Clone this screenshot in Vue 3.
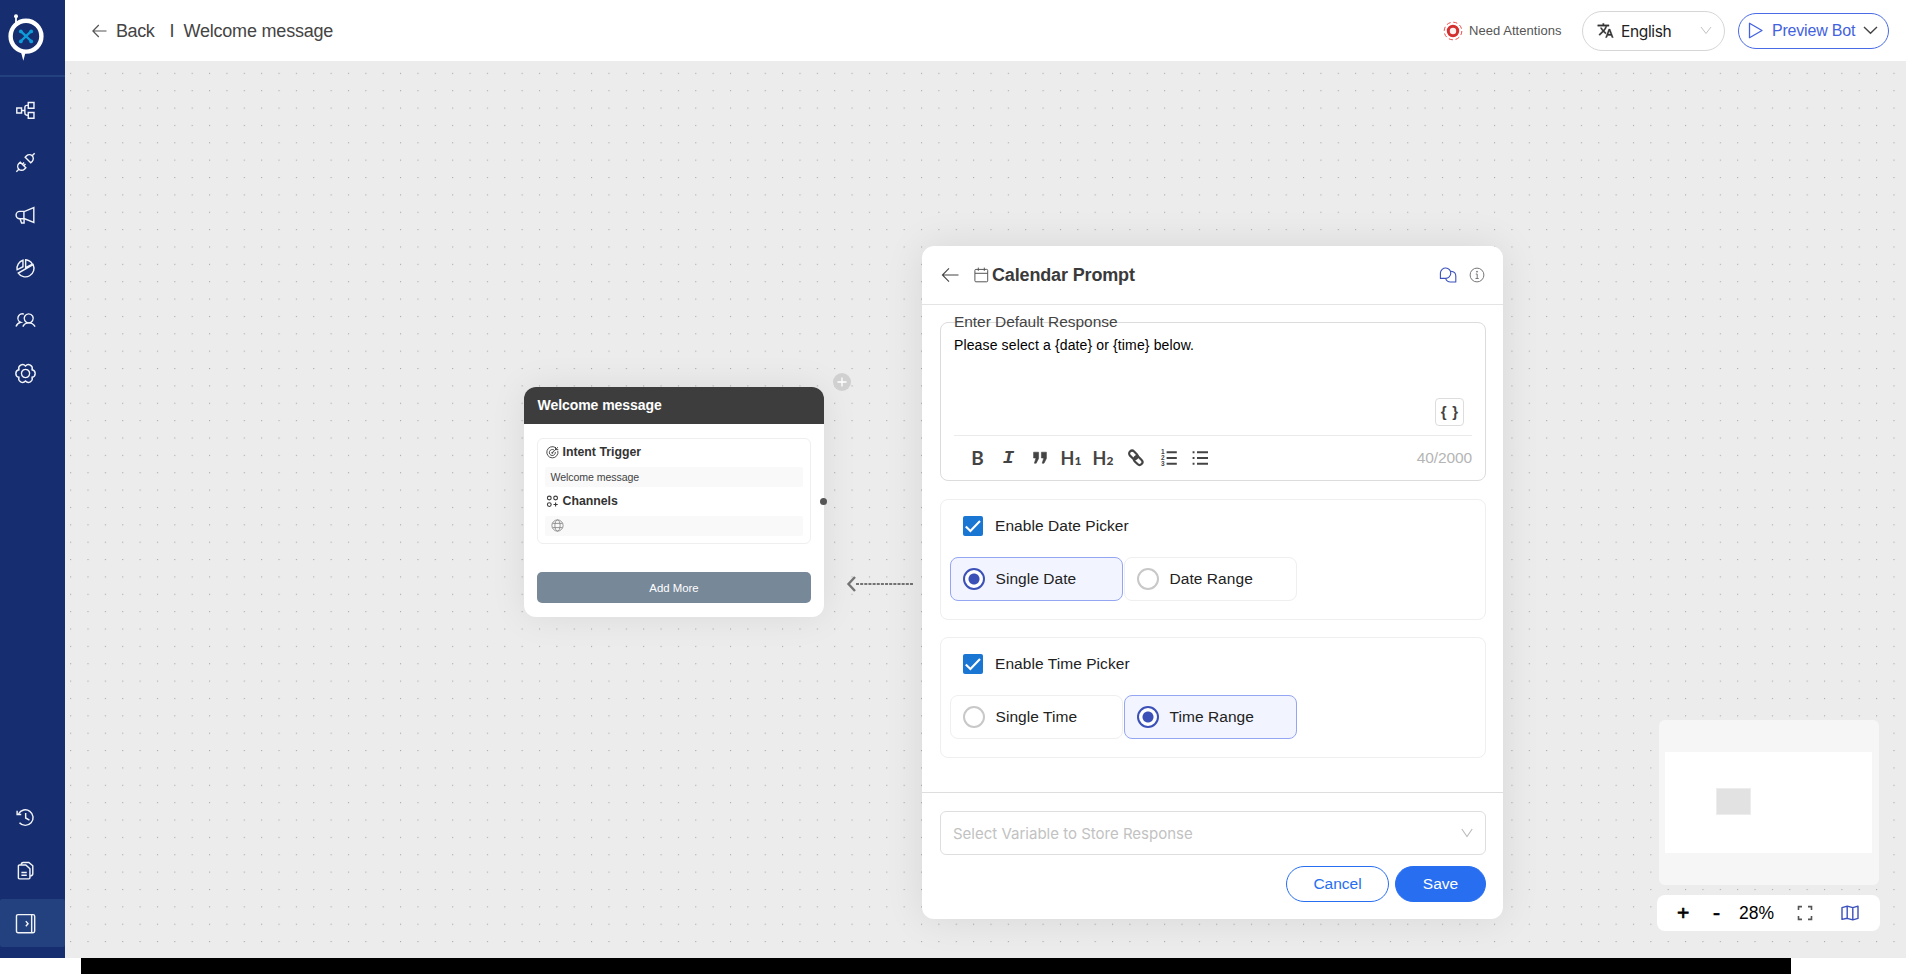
<template>
  <div class="page">
    <div class="workspace">
      <aside class="sidebar">
        <div class="logo">
          <svg width="40" height="50" viewBox="0 0 40 50">
            <path d="M11 6v8" stroke="#fff" stroke-width="1.8" />
            <circle cx="11" cy="4.3" r="2" fill="#fff" />
            <path d="M14.9 36h9l-3.4 4.5-2.2 8.3-2.2-8.3z" fill="#fff" />
            <circle cx="21" cy="24.2" r="15.4" fill="#162e70" stroke="#fff" stroke-width="4.4" />
            <path d="M16 19.4l10 9.6M26 19.4l-10 9.6" stroke="#0d9ddb" stroke-width="2.4" />
            <g fill="#0d9ddb">
              <circle cx="15.8" cy="19.4" r="1.9" />
              <circle cx="26.2" cy="19.4" r="1.9" />
              <circle cx="15.8" cy="29.4" r="1.9" />
              <circle cx="26.2" cy="29.4" r="1.9" />
            </g>
          </svg>
        </div>
        <nav class="menu">
          <a v-for="item in topMenu" :key="item.name" class="menu-item" :title="item.name">
            <svg class="menu-icon" viewBox="0 0 24 24"><path v-for="d in item.paths" :key="d" :d="d" /></svg>
          </a>
        </nav>
        <nav class="menu menu-bottom">
          <a
            v-for="item in bottomMenu"
            :key="item.name"
            class="menu-item"
            :class="{ active: item.active }"
            :title="item.name"
          >
            <svg class="menu-icon" viewBox="0 0 24 24"><path v-for="d in item.paths" :key="d" :d="d" /></svg>
          </a>
        </nav>
      </aside>

      <main class="main">
        <header class="topbar">
          <svg class="back-icon" width="15" height="14" viewBox="0 0 15 14"><path d="M14.5 7H1M6.8 1L.9 7l5.9 6" /></svg>
          <span class="back">Back</span>
          <span class="sep">I</span>
          <span class="title">Welcome message</span>
          <div class="topbar-right">
            <svg width="20" height="20" viewBox="0 0 20 20" fill="none">
              <circle cx="10" cy="10" r="8.8" stroke="#ee4b4b" stroke-width="1" stroke-dasharray="4.2 2.71" />
              <circle cx="10" cy="10" r="4.7" fill="#fff0f0" stroke="#d32f2f" stroke-width="3" />
            </svg>
            <span class="attention">Need Attentions</span>
            <div class="language">
              <svg width="17" height="17" viewBox="0 0 24 24" fill="#333" stroke="#333" stroke-width=".5">
                <path d="M12.87 15.07l-2.54-2.51.03-.03c1.74-1.94 2.98-4.17 3.71-6.53H17V4h-7V2H8v2H1v1.99h11.17C11.5 7.92 10.44 9.75 9 11.35 8.07 10.32 7.3 9.19 6.69 8h-2c.73 1.63 1.73 3.17 2.98 4.56l-5.09 5.02L4 19l5-5 3.11 3.11.76-2.04zM18.5 10h-2L12 22h2l1.12-3h4.75L21 22h2l-4.5-12zm-2.62 7l1.62-4.33L19.12 17h-3.24z" />
              </svg>
              <span class="language-name">English</span>
              <svg class="chevron" width="12" height="9" viewBox="0 0 12 9"><path d="M1 1l5 6.5L11 1" stroke="#c2c2c2" /></svg>
            </div>
            <button class="preview">
              <svg width="16" height="17" viewBox="0 0 16 17"><path d="M1.5 1.3v14.4L14 8.5z" fill="none" stroke="#4262e0" stroke-width="1.3" stroke-linejoin="round" /></svg>
              <span class="preview-text">Preview Bot</span>
              <svg class="chevron" width="15" height="9" viewBox="0 0 15 9"><path d="M1 1l6.5 6.3L14 1" stroke="#444" stroke-width="1.4" /></svg>
            </button>
          </div>
        </header>

        <section class="canvas">
          <svg class="dots" width="1841" height="897">
            <defs>
              <pattern id="grid" x="5.1" y="11.8" width="17.365" height="17.365" patternUnits="userSpaceOnUse">
                <rect width="1.1" height="1.1" fill="#a8a8a8" />
              </pattern>
            </defs>
            <rect width="1841" height="897" fill="url(#grid)" />
          </svg>

          <div class="node">
            <div class="node-head">Welcome message</div>
            <div class="node-body">
              <div class="node-box">
                <div class="node-label">
                  <svg width="13" height="13" viewBox="0 0 13 13" fill="none" stroke="#3a3a3a" stroke-width=".9">
                    <path d="M9.5 1.6A5.6 5.6 0 1 0 11.8 4.8" />
                    <path d="M8 4A3 3 0 1 0 9.3 6" />
                    <path d="M6.3 6.8L12 1.2M9.5 1v2.6h2.8" />
                    <circle cx="6.3" cy="6.8" r=".6" />
                  </svg>
                  <span>Intent Trigger</span>
                </div>
                <div class="node-row">Welcome message</div>
                <div class="node-label">
                  <svg width="13" height="13" viewBox="0 0 13 13" fill="none" stroke="#3a3a3a" stroke-width="1.1">
                    <circle cx="3.3" cy="3" r="1.9" />
                    <circle cx="9.6" cy="3" r="1.9" />
                    <circle cx="3.3" cy="9.6" r="1.9" />
                    <path d="M9.6 7.4v4.2M7.5 9.5h4.2" />
                  </svg>
                  <span>Channels</span>
                </div>
                <div class="node-row">
                  <svg width="13" height="13" viewBox="0 0 13 13" fill="none" stroke="#8a8a8a" stroke-width=".9">
                    <circle cx="6.5" cy="6.5" r="5.6" />
                    <ellipse cx="6.5" cy="6.5" rx="2.6" ry="5.6" />
                    <path d="M1.5 4.4h10M1.5 8.6h10" />
                  </svg>
                </div>
              </div>
              <button class="add-more">Add More</button>
            </div>
            <span class="port"></span>
            <span class="plus">
              <svg width="18" height="18" viewBox="0 0 18 18"><path d="M9 4.5v9M4.5 9h9" stroke="#fff" stroke-width="1.3" /></svg>
            </span>
          </div>

          <svg class="connector" width="70" height="18" viewBox="0 0 70 18" fill="none" stroke="#737373">
            <path d="M9 2L2.5 9 9 16" stroke-width="2.4" />
            <path d="M10 9h58" stroke-width="2" stroke-dasharray="3 1.15" />
          </svg>

          <div class="panel">
            <div class="panel-head">
              <svg width="18" height="16" viewBox="0 0 18 16" fill="none" stroke="#444" stroke-width="1.1"><path d="M17.5 8H1.6M8 1.3L1.4 8 8 14.7" /></svg>
              <svg class="cal-icon" width="15" height="16" viewBox="0 0 15 16" fill="none" stroke="#555" stroke-width="1">
                <rect x=".9" y="2.4" width="12.8" height="12.4" rx="1" />
                <path d="M1 6.3h12.6M4.3.6v3.2M10.3.6v3.2" />
              </svg>
              <h2>Calendar Prompt</h2>
              <svg class="chat-icon" width="18" height="18" viewBox="0 0 18 18" fill="none" stroke="#3b51bd" stroke-width="1.1" stroke-linejoin="round">
                <path d="M1.4 12.4V6.8a5.2 5.2 0 1 1 5.2 5.6z" />
                <path d="M11.9 5.2c2.7.2 4.9 2 4.9 4.8v6h-5.4c-2.3 0-4-1.3-4.7-3.4" />
              </svg>
              <svg width="16" height="16" viewBox="0 0 16 16" fill="none" stroke="#777" stroke-width="1">
                <circle cx="8" cy="8" r="6.9" />
                <path d="M6.8 7h1.4v4.5M6.5 11.5h3.2" />
                <circle cx="8" cy="4.7" r=".5" fill="#777" />
              </svg>
            </div>

            <div class="panel-body">
              <div class="editor">
                <div class="editor-label">Enter Default Response</div>
                <div class="editor-text">Please select a {date} or {time} below.</div>
                <button class="braces">{ }</button>
                <div class="toolbar">
                  <span class="tool bold">B</span>
                  <span class="tool italic">I</span>
                  <span class="tool">
                    <svg width="16" height="14" viewBox="0 0 16 14" fill="#444">
                      <path d="M1.6 1.2h5v6.2l-2.4 4.8H2.4L4 7H1.6zM9.4 1.2h5v6.2L12 12.2h-1.8L11.8 7H9.4z" stroke="#444" stroke-linejoin="round" stroke-width=".6" />
                    </svg>
                  </span>
                  <span class="tool heading">H<small>1</small></span>
                  <span class="tool heading">H<small>2</small></span>
                  <span class="tool link">
                    <svg width="18" height="18" viewBox="0 0 18 18" fill="none" stroke="#444" stroke-width="2.2">
                      <rect x="1.6" y="3" width="9.6" height="5.8" rx="2.9" transform="rotate(45 6.4 5.9)" />
                      <rect x="6.4" y="8.8" width="9.6" height="5.8" rx="2.9" transform="rotate(45 11.2 11.7)" />
                    </svg>
                  </span>
                  <span class="tool list">
                    <svg width="18" height="18" viewBox="0 0 18 18">
                      <path d="M6.6 3.2h10.2M6.6 9h10.2M6.6 14.8h10.2" stroke="#444" stroke-width="2" />
                      <g class="list-num"><text x="1" y="5.4">1</text><text x="1" y="11.4">2</text><text x="1" y="17.2">3</text></g>
                    </svg>
                  </span>
                  <span class="tool list">
                    <svg width="18" height="18" viewBox="0 0 18 18" stroke="#444" stroke-width="2">
                      <path d="M6 3.2h11M6 9h11M6 14.8h11M1.6 3.2h1.9M1.6 9h1.9M1.6 14.8h1.9" />
                    </svg>
                  </span>
                  <span class="counter">40/2000</span>
                </div>
              </div>

              <div v-for="picker in pickers" :key="picker.label" class="picker">
                <div class="picker-check">
                  <span class="checkbox">
                    <svg width="18" height="16" viewBox="0 0 18 16"><path d="M1.8 8.4l4.6 4.6L16 3" fill="none" stroke="#fff" stroke-width="2.1" /></svg>
                  </span>
                  <span>{{ picker.label }}</span>
                </div>
                <div class="options">
                  <div
                    v-for="option in picker.options"
                    :key="option"
                    class="option"
                    :class="{ selected: option === picker.selected }"
                    @click="picker.selected = option"
                  >
                    <span class="radio"></span>
                    <span>{{ option }}</span>
                  </div>
                </div>
              </div>
            </div>

            <div class="panel-foot">
              <div class="select">
                <span>Select Variable to Store Response</span>
                <svg class="chevron" width="12" height="10" viewBox="0 0 12 10"><path d="M.8 1L6 8.6 11.2 1" stroke="#bbb" stroke-width="1.1" /></svg>
              </div>
              <div class="actions">
                <button class="btn cancel">Cancel</button>
                <button class="btn save">Save</button>
              </div>
            </div>
          </div>

          <div class="map-tools">
            <div class="minimap">
              <div class="minimap-view"><div class="minimap-node"></div></div>
            </div>
            <div class="zoom-bar">
              <span class="zoom-btn">+</span>
              <span class="zoom-btn minus">-</span>
              <span class="zoom-value">28%</span>
              <svg class="fit" width="16" height="16" viewBox="0 0 16 16" fill="none" stroke="#555" stroke-width="1.6">
                <path d="M1.5 5V1.6H5M11 1.6h3.5V5M14.5 11v3.4H11M5 14.4H1.5V11" />
              </svg>
              <svg width="18" height="16" viewBox="0 0 18 16" fill="none" stroke="#3b51bd" stroke-width="1.4" stroke-linejoin="round">
                <path d="M1 2.6l5.2-1.5 5.6 1.6 5.2-1.5v12.2l-5.2 1.5-5.6-1.6L1 14.4zM6.2 1.1v12.2M11.8 2.7v12.2" />
              </svg>
            </div>
          </div>
        </section>
      </main>
    </div>
    <footer class="bottom-strip"></footer>
  </div>
</template>

<script setup>
import { ref } from 'vue'

const topMenu = [
  { name: 'Flows', paths: ['M1 8.8h6v6.4H1z', 'M15.5 2h7.2v7.2h-7.2z', 'M15.5 14.6h7.2v7.2h-7.2z', 'M7 12h4.2M15.5 5.5h-1.7q-2.6 0-2.6 2.6v7.2q0 2.6 2.6 2.6h1.7'] },
  { name: 'Integrations', paths: ['M11.6 5.4l7 7 1.8-1.8a4.9 4.9 0 0 0-7-7z', 'M5.4 11.6l7 7-1.8 1.8a4.9 4.9 0 0 1-7-7z', 'M20.4 3.6L23.6.4M3.6 20.4L.4 23.6', 'M8 14.2l2.2-2.2M9.8 16l2.2-2.2'] },
  { name: 'Broadcast', paths: ['M22.5 2v18.8L11 16.2H4.8a4.7 4.7 0 0 1 0-9.4H11z', 'M10 7v9.2M5.2 16.4l1.8 5h3.2v-5'] },
  { name: 'Analytics', paths: ['M8.8 1.6v8.2L1.4 13.6A11 11 0 0 1 8.8 1.6z', 'M12.2 1v10l8.4-4.5A10.6 10.6 0 0 0 12.2 1z', 'M21.6 7.1A10.8 10.8 0 0 1 2.9 17.8z'] },
  { name: 'Users', paths: ['M16 3.6a5.7 5.7 0 1 0 .1 0z', 'M8.6 19.8q2.4-4.8 7.5-4.8t8 4.8', 'M10 3.9a5.5 5.5 0 0 0-4 10.4Q2 15 0 19.6'] },
  { name: 'Settings', paths: ['M12 6.8a5.2 5.2 0 1 0 .1 0z', 'M12 2.4A4.9 4.9 0 0 1 20.3 7.2A4.9 4.9 0 0 1 20.3 16.8A4.9 4.9 0 0 1 12 21.6A4.9 4.9 0 0 1 3.7 16.8A4.9 4.9 0 0 1 3.7 7.2A4.9 4.9 0 0 1 12 2.4z'] }
]

const bottomMenu = [
  { name: 'History', paths: ['M3.2 7.4A9.8 9.8 0 1 1 4.4 18.6', 'M1.4 3.6v4.6h5.2', 'M12.2 6.4v6.2l4.8 2.8'] },
  { name: 'Documents', paths: ['M3 6.4q0-1.4 1.4-1.4h8l5.2 4.8v11.4q0 1.4-1.4 1.4H4.4Q3 22.6 3 21.2z', 'M6.6 4.6q0-2.8 2.6-2.8h7l5 4.2v10q0 2.6-3.4 2.8', 'M6.8 14.6h6.8M6.8 18h6.8'] },
  { name: 'Expand', active: true, paths: ['M2.6.8h19q2 0 2 2v18.8q0 2-2 2h-19q-2 0-2-2V2.8q0-2 2-2z', 'M19.8.8v22.6M12.4 9l2.8 3.2-2.8 3.2'] }
]

const pickers = ref([
  { label: 'Enable Date Picker', options: ['Single Date', 'Date Range'], selected: 'Single Date' },
  { label: 'Enable Time Picker', options: ['Single Time', 'Time Range'], selected: 'Time Range' }
])
</script>

<style>
body {
  background: #fff;
  overflow: hidden;
}
</style>

<style scoped>
.page {
  height: 974px;
  font-family: "Liberation Sans", Arial, sans-serif;
  color: #333;
}
.page *,
.page {
  box-sizing: border-box;
}
button {
  font-family: inherit;
  cursor: pointer;
}
svg {
  flex-shrink: 0;
}
.workspace {
  display: flex;
  height: 958px;
}
.bottom-strip {
  height: 16px;
  margin-left: 81px;
  width: 1710px;
  background: #000;
}
.sidebar {
  width: 65px;
  background: #162e70;
  display: flex;
  flex-direction: column;
  flex-shrink: 0;
}
.logo {
  height: 77px;
  padding: 12px 0 0 5px;
  border-bottom: 2px solid #23417f;
}
.menu {
  display: flex;
  flex-direction: column;
  gap: 4.7px;
  padding-top: 9px;
}
.menu-bottom {
  margin-top: auto;
  padding: 0 0 11px;
}
.menu-item {
  height: 48px;
  padding-left: 16px;
  display: flex;
  align-items: center;
  border-radius: 2px;
}
.menu-item.active {
  background: #23407f;
}
.menu-icon {
  width: 19px;
  height: 19px;
  overflow: visible;
  fill: none;
  stroke: #f2f4f8;
  stroke-width: 1.8;
}
.main {
  flex: 1;
  display: flex;
  flex-direction: column;
}
.topbar {
  height: 61px;
  background: #fff;
  display: flex;
  align-items: center;
  padding: 0 17px 0 27px;
}
.back-icon {
  fill: none;
  stroke: #555;
  stroke-width: 1.2;
}
.back,
.sep,
.title {
  padding-top: 1px;
  font-size: 18px;
  color: #444;
}
.back {
  margin-left: 9px;
  letter-spacing: -0.4px;
}
.sep {
  margin-left: 15px;
}
.title {
  margin-left: 9px;
  letter-spacing: -0.2px;
}
.topbar-right {
  margin-left: auto;
  display: flex;
  align-items: center;
}
.attention {
  margin: 0 20px 0 6px;
  font-size: 13px;
  width: 93px;
  letter-spacing: 0.05px;
  white-space: nowrap;
  color: #555;
}
.language {
  width: 143px;
  height: 40px;
  border: 1px solid #d6d6d6;
  border-radius: 20px;
  display: flex;
  align-items: center;
  padding: 0 12px 0 14px;
}
.language-name {
  margin-left: 7px;
  padding-top: 1px;
  font-family: Inter, sans-serif;
  font-size: 15.5px;
  letter-spacing: -0.35px;
  color: #222;
}
.chevron {
  margin-left: auto;
  fill: none;
}
.preview {
  margin-left: 13px;
  width: 151px;
  height: 36px;
  border: 1.3px solid #4a6be6;
  border-radius: 18px;
  background: #fff;
  display: flex;
  align-items: center;
  padding: 0 10px 0 9px;
}
.preview-text {
  margin-left: 8px;
  font-size: 16px;
  letter-spacing: -0.2px;
  color: #4262e0;
  white-space: nowrap;
}
.canvas {
  flex: 1;
  position: relative;
  background: #ececec;
  overflow: hidden;
}
.dots {
  display: block;
}
.node {
  position: absolute;
  left: 459px;
  top: 326px;
  width: 300px;
  height: 230px;
  background: #fff;
  border-radius: 12px;
  box-shadow: 0 0 36px rgba(0, 0, 0, 0.08);
}
.node-head {
  height: 37px;
  background: #3d3d3d;
  color: #fff;
  font-size: 14px;
  font-weight: bold;
  line-height: 37px;
  padding-left: 13.5px;
  letter-spacing: -0.05px;
  border-radius: 12px 12px 0 0;
}
.node-body {
  padding: 14px 13px;
}
.node-box {
  height: 106px;
  border: 1px solid #efefef;
  border-radius: 6px;
  padding: 3px 7px;
}
.node-label {
  height: 20px;
  margin-bottom: 4.5px;
  padding-left: 1px;
  display: flex;
  align-items: center;
  gap: 3.5px;
  font-size: 12.3px;
  font-weight: bold;
}
.node-row {
  height: 20px;
  margin-bottom: 4.5px;
  padding-left: 5.5px;
  background: #f9f9f9;
  border-radius: 2px;
  display: flex;
  align-items: center;
  font-size: 10.6px;
  letter-spacing: -0.08px;
  color: #444;
}
.add-more {
  display: block;
  width: 274px;
  height: 31px;
  margin-top: 28px;
  border: none;
  border-radius: 5px;
  background: #778899;
  color: #fff;
  font-size: 11.4px;
}
.port {
  position: absolute;
  right: -3px;
  top: 111px;
  width: 7px;
  height: 7px;
  border-radius: 50%;
  background: #555;
}
.plus {
  position: absolute;
  left: 309px;
  top: -14px;
  width: 18px;
  height: 18px;
  border-radius: 50%;
  background: #d0d0d0;
}
.plus svg {
  display: block;
}
.connector {
  position: absolute;
  left: 781px;
  top: 514px;
}
.panel {
  position: absolute;
  left: 857px;
  top: 185px;
  width: 581px;
  height: 673px;
  background: #fff;
  border-radius: 12px;
  box-shadow: 0 0 40px rgba(0, 0, 0, 0.09);
  display: flex;
  flex-direction: column;
}
.panel-head {
  height: 59px;
  border-bottom: 1px solid #e4e4e4;
  display: flex;
  align-items: center;
  padding: 0 18px 0 19px;
}
.panel-head h2 {
  margin: 0 auto 0 3px;
  font-size: 18px;
  letter-spacing: -0.15px;
  color: #3a3a3a;
}
.cal-icon {
  margin-left: 15px;
}
.chat-icon {
  margin-right: 12px;
}
.panel-body {
  flex: 1;
  padding: 17px 17px 0 18px;
}
.editor {
  height: 159px;
  border: 1px solid #dcdcdc;
  border-radius: 8px;
  padding: 0 13px;
  display: flex;
  flex-direction: column;
}
.editor-label {
  margin-top: -11px;
  line-height: 20px;
  font-size: 15.5px;
  letter-spacing: -0.05px;
  color: #444;
}
.editor-text {
  margin-top: 4px;
  height: 63px;
  font-size: 14px;
  line-height: 18px;
  letter-spacing: 0.13px;
  color: #000;
}
.braces {
  width: 29px;
  height: 28px;
  margin: 0 8px 9px auto;
  padding: 0;
  border: 1px solid #ddd;
  border-radius: 4px;
  background: #fff;
  font-size: 15px;
  font-weight: bold;
  word-spacing: 1.5px;
  color: #444;
}
.toolbar {
  height: 46px;
  border-top: 1px solid #ebebeb;
  display: flex;
  align-items: center;
  padding-left: 8px;
}
.tool {
  width: 31px;
  height: 20px;
  display: flex;
  align-items: center;
  justify-content: center;
  color: #444;
}
.bold {
  font: bold 19px Lato, sans-serif;
}
.italic {
  font: italic bold 19px "Liberation Mono", monospace;
}
.heading {
  font: bold 18px/20px Lato, sans-serif;
  align-items: baseline;
  width: 32px;
}
.heading small {
  font-size: 12px;
  font-weight: 900;
}
.link {
  width: 34px;
}
.list {
  width: 31.5px;
}
.list-num text {
  font: bold 6.5px "Liberation Sans", sans-serif;
  fill: #444;
}
.counter {
  margin-left: auto;
  font-size: 15.5px;
  letter-spacing: -0.1px;
  color: #b5b5b5;
}
.picker {
  margin-top: 17.5px;
  height: 121px;
  border: 1px solid #efefef;
  border-radius: 8px;
  padding: 16px 9px;
  font-size: 15.5px;
  color: #222;
}
.picker-check {
  height: 20px;
  display: flex;
  align-items: center;
  gap: 12px;
  padding-left: 13px;
  letter-spacing: 0.06px;
}
.checkbox {
  width: 20px;
  height: 20px;
  border-radius: 2px;
  background: #1976d2;
  display: flex;
  align-items: center;
  justify-content: center;
}
.options {
  display: flex;
  gap: 1px;
  margin-top: 21px;
}
.option {
  width: 173px;
  height: 44px;
  border: 1px solid #efefef;
  border-radius: 8px;
  display: flex;
  align-items: center;
  gap: 11px;
  padding-left: 11.5px;
  letter-spacing: 0.06px;
  cursor: pointer;
}
.option.selected {
  background: #f2f4ff;
  border-color: #94a6f3;
}
.radio {
  width: 22px;
  height: 22px;
  border: 2px solid #c8c8c8;
  border-radius: 50%;
  background: #fff;
}
.selected .radio {
  border-color: #3b51b8;
  background: radial-gradient(circle, #3b51b8 5px, #fff 6px);
}
.panel-foot {
  height: 127px;
  border-top: 1px solid #dedede;
  padding: 18px 17px 0 18px;
}
.select {
  height: 44px;
  border: 1px solid #dedede;
  border-radius: 6px;
  display: flex;
  align-items: center;
  padding: 0 12px;
  font-family: Inter, sans-serif;
  font-size: 15px;
  color: #c2c2c2;
}
.actions {
  display: flex;
  justify-content: flex-end;
  gap: 6px;
  margin-top: 11px;
}
.btn {
  height: 36px;
  border: 1px solid #276ef1;
  border-radius: 18px;
  padding: 0 0 1px;
  font-size: 15.5px;
}
.cancel {
  width: 103px;
  background: #fff;
  color: #276ef1;
}
.save {
  width: 91px;
  background: #276ef1;
  color: #fff;
}
.map-tools {
  position: absolute;
  right: 26px;
  bottom: 27px;
  width: 223px;
  display: flex;
  flex-direction: column;
  align-items: center;
  gap: 10px;
}
.minimap {
  width: 220px;
  height: 165px;
  padding: 32px 7px 0 6px;
  border-radius: 6px;
  background: #f6f6f6;
}
.minimap-view {
  height: 101px;
  background: #fff;
  padding: 36px 0 0 51px;
}
.minimap-node {
  width: 35px;
  height: 27px;
  background: #e2e2e2;
  border: 1px solid #ededed;
}
.zoom-bar {
  width: 223px;
  height: 36px;
  border-radius: 8px;
  background: #fff;
  display: flex;
  align-items: center;
  padding: 0 21px 0 20px;
  color: #000;
}
.zoom-btn {
  font-size: 21px;
  line-height: 30px;
  width: 14px;
  -webkit-text-stroke: 0.7px #000;
}
.minus {
  margin-left: 22px;
}
.zoom-value {
  margin-left: 12px;
  width: 36px;
  font-size: 17.5px;
}
.fit {
  margin-left: 22px;
  margin-right: auto;
}
</style>
